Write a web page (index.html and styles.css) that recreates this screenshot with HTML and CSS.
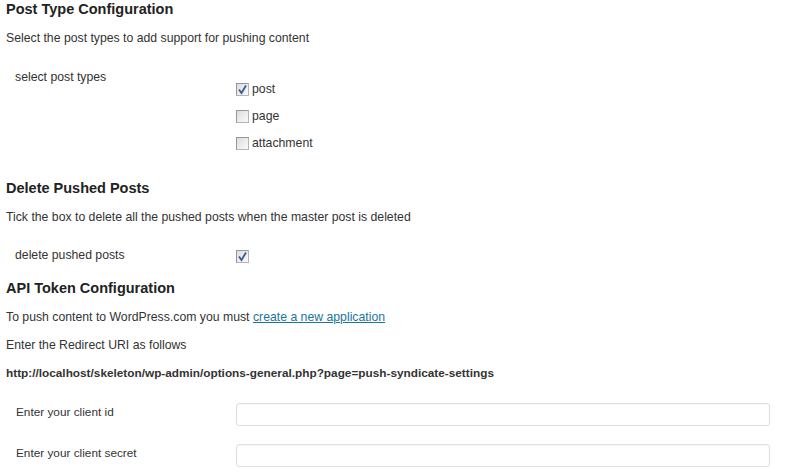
FILE: index.html
```html
<!DOCTYPE html>
<html>
<head>
<meta charset="utf-8">
<title>Push Syndicate Settings</title>
<link rel="stylesheet" href="styles.css">
</head>
<body>
<div class="wrap">
  <h3 class="title">Post Type Configuration</h3>
  <p class="desc">Select the post types to add support for pushing content</p>
  <div class="row row-types">
    <div class="label">select post types</div>
    <ul class="checklist">
      <li><span class="cb checked"><svg viewBox="0 0 13 13" width="13" height="13"><path d="M3 6.5 L5.5 10 L10 2.5" fill="none" stroke="#3a5a9a" stroke-width="1.8"/></svg></span>post</li>
      <li><span class="cb"></span>page</li>
      <li><span class="cb"></span>attachment</li>
    </ul>
  </div>

  <h3 class="title t-delete">Delete Pushed Posts</h3>
  <p class="desc">Tick the box to delete all the pushed posts when the master post is deleted</p>
  <div class="row row-delete">
    <div class="label">delete pushed posts</div>
    <div><span class="cb checked"><svg viewBox="0 0 13 13" width="13" height="13"><path d="M3 6.5 L5.5 10 L10 2.5" fill="none" stroke="#3a5a9a" stroke-width="1.8"/></svg></span></div>
  </div>

  <h3 class="title t-api">API Token Configuration</h3>
  <p class="desc">To push content to WordPress.com you must <a href="#">create a new application</a></p>
  <p class="desc d-tight">Enter the Redirect URI as follows</p>
  <p class="desc d-tight uri">http://localhost/skeleton/wp-admin/options-general.php?page=push-syndicate-settings</p>

  <div class="row row-input r-id">
    <div class="label l-input">Enter your client id</div>
    <input class="text" type="text">
  </div>
  <div class="row row-input r-secret">
    <div class="label l-input">Enter your client secret</div>
    <input class="text" type="text">
  </div>
</div>
</body>
</html>
```

FILE: styles.css
```css
html, body {
  margin: 0;
  padding: 0;
  background: #fff;
}
body {
  font-family: "Liberation Sans", Arial, sans-serif;
  font-size: 12.25px;
  color: #333;
}
.wrap {
  padding: 0 0 0 6px;
}
.title {
  margin: 0;
  font-size: 14.5px;
  line-height: 18px;
  font-weight: bold;
  color: #222;
}
.desc {
  margin: 11px 0 0;
  line-height: 18px;
}
.d-tight {
  margin-top: 10px;
}
.uri {
  font-weight: bold;
  font-size: 11.8px;
  color: #333;
}
a {
  color: #21759b;
  text-decoration: underline;
}
.row {
  display: grid;
  grid-template-columns: 230px 1fr;
  align-items: start;
}
.label {
  padding-left: 9px;
  line-height: 18px;
}
.row-types {
  margin-top: 21px;
}
.checklist {
  list-style: none;
  margin: 0;
  padding: 12px 0 0;
  display: flex;
  flex-direction: column;
  gap: 9px;
}
.checklist li {
  display: flex;
  align-items: center;
  height: 18px;
  line-height: 18px;
}
.cb {
  display: inline-block;
  width: 11px;
  height: 11px;
  border: 1px solid #979797;
  border-color: #979797 #b5b5b5 #b5b5b5 #979797;
  background: linear-gradient(135deg, #dcdcdc, #fafafa);
  margin-right: 3px;
  position: relative;
  vertical-align: middle;
}
.cb svg {
  position: absolute;
  left: -1px;
  top: -1px;
}
.t-delete {
  margin-top: 27px;
}
.row-delete {
  margin-top: 20px;
  line-height: 18px;
}
.row-delete .cb {
  margin-top: 1px;
}
.t-api {
  margin-top: 15px;
}
.r-id {
  margin-top: 21px;
}
.r-secret {
  margin-top: 18px;
}
.l-input {
  padding-left: 10px;
  font-size: 11.8px;
  padding-top: 0;
}
.text {
  box-sizing: border-box;
  width: 534px;
  height: 23px;
  margin: 0;
  border: 1px solid #dfdfdf;
  border-radius: 3px;
  background: #fff;
  box-shadow: inset 0 1px 2px rgba(0,0,0,0.04);
  font: inherit;
}
```
